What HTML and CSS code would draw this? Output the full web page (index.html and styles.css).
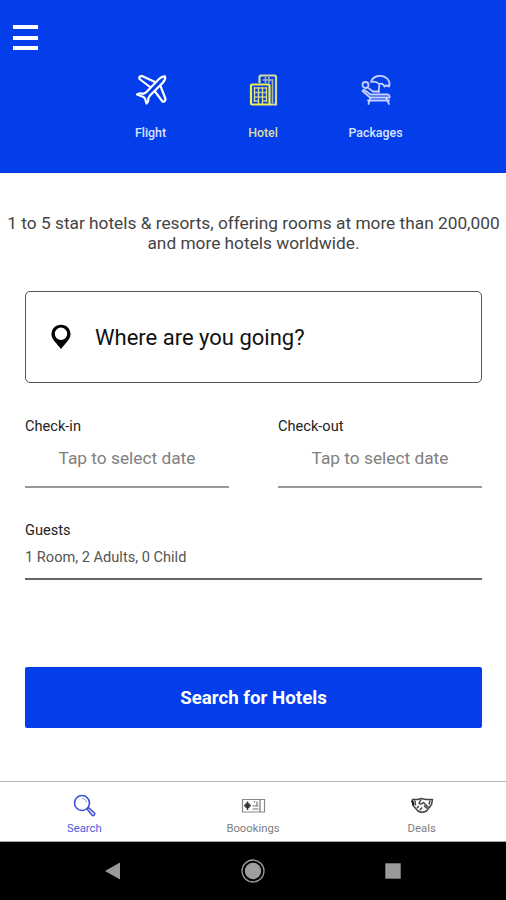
FILE: index.html
```
<!DOCTYPE html>
<html lang="en">
<head>
    <meta charset="UTF-8">
    <meta name="viewport" content="width=device-width, initial-scale=1.0">
    <title>Hotels</title>
    <link rel="stylesheet" href="styles.css">
</head>
<body>
    <header class="header">
        <div class="menu-button">
            <span></span>
            <span></span>
            <span></span>
        </div>
        <nav class="categories">
            <a class="category">
                <svg width="34" height="34" viewBox="0 0 34 34" fill="none" stroke="#fff" stroke-width="2.2" stroke-linejoin="round" stroke-linecap="round">
                    <path d="M12 19.500 L24.500 6.500 Q29 2.800 31 3.600 Q32 6 28.500 10 L16 22.500 L14.200 25.500 Q15 28 12.500 30.500 L11 25.500 L9.500 24 L3 21.500 Q6 19.500 9.500 20.800 Z"/>
                    <path d="M21 9 L8 3 Q4.500 3 5.500 6 L16 14 M26.500 13 L31.500 26 Q31 29.500 28.500 28.500 L21 18.500"/>
                </svg>
                <span>Flight</span>
            </a>
            <a class="category active">
                <svg width="34" height="34" viewBox="0 0 34 34" fill="none">
                    <path d="M13.500 10 V4 Q13.500 2.500 15 2.500 H28.500 Q30 2.500 30 4 V31.500 H23" stroke="#d8dc9a" stroke-width="2.200"/>
                    <rect x="5" y="11.500" width="18.500" height="20" rx="1" stroke="#f0f04a" stroke-width="2.200"/>
                    <path d="M16.500 7 H26.500 M19.500 4 V10 M23 4 V10 M26.500 6 V30" stroke="#aab8b0" stroke-width="1.600"/>
                    <path d="M8 15 H21 M8 19.500 H21 M8 24 H21 M8 28 H12 M17 28 H21" stroke="#b5bdbd" stroke-width="1.600"/>
                    <path d="M8.500 14 V29 M12.500 14 V31 M16.500 14 V31 M20.500 14 V29" stroke="#dce078" stroke-width="1.400"/>
                </svg>
                <span>Hotel</span>
            </a>
            <a class="category">
                <svg width="34" height="34" viewBox="0 0 34 34" fill="none" stroke="#c5d2ff" stroke-width="1.800" stroke-linejoin="round" stroke-linecap="round">
                    <path d="M12 9 C14 2 24 1 28.500 6 Q31.500 9.500 30 13.500 Q27.500 11.500 25.500 13.500 Q23.500 9.500 20 11 Q17 7.500 12 9 Z M20.500 11 L19.500 19"/>
                    <circle cx="6.500" cy="12" r="3"/>
                    <path d="M3.500 18 Q4 16.500 5.800 17.300 L11.500 21.500 H28 Q31 21.500 30.500 24.500 H11 Z M10 15.500 L14 18.500 H20 M9 27.500 H30 M11.500 24.500 L9.500 31 M27 24.500 L30 31"/>
                </svg>
                <span>Packages</span>
            </a>
        </nav>
    </header>

    <main class="content">
        <p class="intro">1 to 5 star hotels &amp; resorts, offering rooms at more than 200,000<br>and more hotels worldwide.</p>

        <div class="destination">
            <svg width="20" height="26" viewBox="0 0 20 26">
                <path fill="#000" fill-rule="evenodd" d="M10 .8 C4.500 .8 .5 4.900 .5 10.200 C.5 15.500 6 19.500 10 25 C14 19.500 19.500 15.500 19.500 10.200 C19.500 4.900 15.500 .8 10 .8 Z M10 3.600 A6.200 6.200 0 1 1 10 16 A6.200 6.200 0 1 1 10 3.600 Z"/>
            </svg>
            <span>Where are you going?</span>
        </div>

        <div class="dates">
            <div class="date-field">
                <label>Check-in</label>
                <div class="date-value">Tap to select date</div>
            </div>
            <div class="date-field">
                <label>Check-out</label>
                <div class="date-value">Tap to select date</div>
            </div>
        </div>

        <div class="guests">
            <label>Guests</label>
            <div class="guests-value">1 Room, 2 Adults, 0 Child</div>
        </div>

        <button class="search-button">Search for Hotels</button>
    </main>

    <nav class="tab-bar">
        <a class="tab active">
            <svg width="26" height="26" viewBox="0 0 26 26" fill="none" stroke="#3c50d8" stroke-width="1.600" stroke-linejoin="round">
                <circle cx="11" cy="10" r="7.500"/>
                <path d="M11 5.300 Q15 5.500 15.700 9.500" stroke-width="1" stroke="#8f9cec"/>
                <path d="M16 16 L21.500 22.500 Q23.500 23 23.800 20.500 L17.500 14.500 Z"/>
            </svg>
            <span>Search</span>
        </a>
        <a class="tab">
            <svg width="26" height="26" viewBox="0 0 26 26" fill="none" stroke="#777" stroke-width="1.200">
                <path d="M2.500 6.500 H24.500 V19 H2.500 Z" stroke="#888"/>
                <path d="M7.500 8.500 V17 M4 12.500 H11 M5.500 10.500 L9.500 14.500 M5.500 14.500 L9.500 10.500" stroke="#333" stroke-width="1.500"/>
                <path d="M12.500 13 H18.500 M12.500 16 H18.500 M14.500 8 V9.500 M17 8.500 V13 M20 6.500 V19"/>
            </svg>
            <span>Boookings</span>
        </a>
        <a class="tab">
            <svg width="26" height="26" viewBox="0 0 26 26" fill="none" stroke="#444" stroke-width="1.500" stroke-linejoin="round">
                <path d="M3.500 6.500 H9 L12 5.500 L17 6.500 H23.500 L22.500 11.500 L17.500 18 Q13 20.500 9 18 L4 12.500 Z"/>
                <path d="M12 6.500 L10 10.500 Q12 12 14.500 9.500 L19.500 14.500 M6 7.500 L6.500 12.500 M8 15 L10 13 M11 17 L13 14.500 M15 12.500 L18 15.500 M21 7.500 L20 11.500"/>
                <path d="M3 7.500 L4.500 12" stroke="#111" stroke-width="2"/>
            </svg>
            <span>Deals</span>
        </a>
    </nav>

    <div class="system-bar">
        <svg width="26" height="26" viewBox="0 0 26 26"><path d="M5 13 L20 4.500 V21.500 Z" fill="#9a9a9a"/></svg>
        <svg width="26" height="26" viewBox="0 0 26 26">
            <circle cx="13" cy="13" r="11" fill="none" stroke="#9a9a9a" stroke-width="1.300"/>
            <circle cx="13" cy="13" r="8.200" fill="#9e9e9e"/>
        </svg>
        <svg width="26" height="26" viewBox="0 0 26 26"><rect x="5.300" y="5.300" width="15.400" height="15.400" fill="#9a9a9a"/></svg>
    </div>
</body>
</html>
```

FILE: styles.css
```
* {
    box-sizing: border-box;
}
body {
    font-family: Roboto, Arial, sans-serif;
    background-color: #fff;
    margin: 0;
    height: 900px;
    display: flex;
    flex-direction: column;
    overflow: hidden;
}
.header {
    background-color: #043eeb;
    height: 173px;
    padding-top: 25px;
}
.menu-button {
    width: 25px;
    height: 25px;
    margin-left: 13px;
    display: flex;
    flex-direction: column;
    justify-content: space-between;
}
.menu-button span {
    height: 4px;
    background-color: #fff;
}
.categories {
    display: flex;
    justify-content: center;
    padding-left: 20px;
    margin-top: 23px;
}
.category {
    width: 112.5px;
    display: flex;
    flex-direction: column;
    align-items: center;
    color: #dbe3ff;
    font-size: 12.4px;
    font-weight: 500;
    line-height: 16px;
    gap: 18px;
}
.category.active {
    color: #d9dc9c;
}
.content {
    flex: 1;
    padding: 40px 24px 0 25px;
}
.intro {
    margin: 0 -24px;
    text-align: center;
    font-size: 17.3px;
    line-height: 20px;
    color: #444;
    white-space: nowrap;
}
.destination {
    height: 92px;
    margin-top: 38px;
    padding-left: 25px;
    border: 1px solid #555;
    border-radius: 5px;
    display: flex;
    align-items: center;
    gap: 24px;
    font-size: 22px;
    color: #111;
}
label {
    display: block;
    font-size: 14.6px;
    line-height: 18px;
    color: #222;
}
.dates {
    display: flex;
    gap: 49px;
    margin-top: 34px;
}
.date-field {
    flex: 1;
    height: 71px;
    border-bottom: 2px solid #999;
}
.date-value {
    margin-top: 12px;
    text-align: center;
    font-size: 17.3px;
    line-height: 22px;
    color: #808080;
}
.guests {
    height: 59px;
    margin-top: 33px;
    border-bottom: 2px solid #666;
}
.guests-value {
    margin-top: 9px;
    font-size: 14.6px;
    line-height: 18px;
    color: #555;
}
.search-button {
    display: block;
    width: 100%;
    height: 61px;
    margin-top: 87px;
    border: none;
    border-radius: 2px;
    background-color: #043eeb;
    color: #fff;
    font-family: inherit;
    font-size: 18.7px;
    font-weight: 700;
}
.tab-bar {
    height: 61px;
    border-top: 1px solid #b5b5b5;
    border-bottom: 1px solid #aaa;
    display: flex;
}
.tab {
    flex: 1;
    display: flex;
    flex-direction: column;
    align-items: center;
    padding-top: 11px;
    gap: 3px;
    font-size: 11.3px;
    line-height: 14px;
    color: #808080;
}
.tab.active {
    color: #4a5ce0;
}
.system-bar {
    height: 58px;
    background-color: #000;
    display: flex;
    justify-content: center;
    align-items: center;
    gap: 114px;
}
```
